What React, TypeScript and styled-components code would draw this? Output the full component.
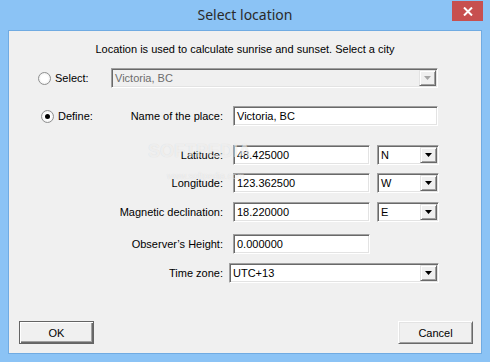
import {FC} from 'react';
import {createGlobalStyle, styled} from 'styled-components';

const GlobalStyle = createGlobalStyle`
  html, body {
    margin: 0;
    padding: 0;
  }
  body {
    width: 490px;
    height: 362px;
    overflow: hidden;
    font-family: "Liberation Sans", Arial, sans-serif;
    font-size: 11px;
    color: #000000;
  }
`;

const ArrowIcon: FC<{disabled?: boolean}> = ({disabled}) => (
  <svg width="7" height="4" viewBox="0 0 7 4">
    <path d="M0 0h7L3.5 4z" fill={disabled ? '#a6a6a6' : '#000000'} />
  </svg>
);

const Combo: FC<{value: string; width: number; disabled?: boolean}> = props => {
  const {value, width, disabled} = props;
  return (
    <Sunken $width={width} $disabled={disabled}>
      <Value $disabled={disabled}>{value}</Value>
      <DropButton>
        <ArrowIcon disabled={disabled} />
      </DropButton>
    </Sunken>
  );
};

const Field: FC<{value: string; width: number}> = ({value, width}) => (
  <Sunken $width={width}>
    <Value>{value}</Value>
  </Sunken>
);

const coords = [
  {label: 'Latitude:', value: '48.425000', dir: 'N', mt: 19},
  {label: 'Longitude:', value: '123.362500', dir: 'W', mt: 8},
  {label: 'Magnetic declination:', value: '18.220000', dir: 'E', mt: 9},
];

export default function App() {
  return (
    <>
      <GlobalStyle />
      <Window>
        <TitleBar>
          <Title>Select location</Title>
          <CloseButton>
            <svg width="10" height="9" viewBox="0 0 10 9">
              <path d="M1 0.5l8 8M9 0.5l-8 8" stroke="#ffffff" strokeWidth="2" />
            </svg>
          </CloseButton>
        </TitleBar>
        <Client>
          <Intro>Location is used to calculate sunrise and sunset. Select a city</Intro>

          <Row $mt={12}>
            <LeftCol $width={102}>
              <RadioOption $indent={29}>
                <Radio />
                Select:
              </RadioOption>
            </LeftCol>
            <Combo value="Victoria, BC" width={327} disabled />
          </Row>

          <Row $mt={18}>
            <LeftCol $width={214}>
              <RadioOption $indent={32}>
                <Radio $checked />
                Define:
              </RadioOption>
              <span>Name of the place:</span>
            </LeftCol>
            <Spacer $width={10} />
            <Field value="Victoria, BC" width={205} />
          </Row>

          {coords.map(c => (
            <Row key={c.label} $mt={c.mt}>
              <Label>{c.label}</Label>
              <Spacer $width={10} />
              <Field value={c.value} width={137} />
              <Spacer $width={7} />
              <Combo value={c.dir} width={62} />
            </Row>
          ))}

          <Row $mt={12}>
            <Label>Observer’s Height:</Label>
            <Spacer $width={10} />
            <Field value="0.000000" width={137} />
          </Row>

          <Row $mt={9}>
            <Label>Time zone:</Label>
            <Spacer $width={6} />
            <Combo value="UTC+13" width={210} />
          </Row>

          <Footer>
            <Button $default>OK</Button>
            <Button>Cancel</Button>
          </Footer>

          <Watermark>
            SOFTPEDIA
            <small>www.softpedia.com</small>
          </Watermark>
        </Client>
      </Window>
    </>
  );
}

const Window = styled.div`
  width: 490px;
  height: 362px;
  box-sizing: border-box;
  display: flex;
  flex-direction: column;
  background: #8bc3f5;
`;

const TitleBar = styled.div`
  height: 30px;
  flex-shrink: 0;
  display: grid;
  grid-template-columns: 1fr auto 1fr;
  align-items: start;
`;

const Title = styled.div`
  grid-column: 2;
  font-family: "Noto Sans", "Open Sans", sans-serif;
  font-size: 14px;
  line-height: 30px;
  color: #2a2a2a;
`;

const CloseButton = styled.div`
  grid-column: 3;
  justify-self: end;
  margin: 1px 7px 0 0;
  width: 31px;
  height: 20px;
  background: #c75050;
  display: flex;
  align-items: center;
  justify-content: center;
`;

const Client = styled.div`
  position: relative;
  flex: 1;
  margin: 0 8px 8px;
  background: #f0f0f0;
  border: 1px solid #70abe2;
  display: flex;
  flex-direction: column;
`;

const Intro = styled.div`
  margin-top: 11px;
  line-height: 14px;
  text-align: center;
`;

const Row = styled.div<{$mt: number}>`
  display: flex;
  align-items: center;
  height: 20px;
  margin-top: ${p => p.$mt}px;
`;

const LeftCol = styled.div<{$width: number}>`
  width: ${p => p.$width}px;
  flex-shrink: 0;
  display: flex;
  align-items: center;
  justify-content: space-between;
`;

const RadioOption = styled.label<{$indent: number}>`
  display: flex;
  align-items: center;
  gap: 4px;
  padding-left: ${p => p.$indent}px;
`;

const Radio = styled.span<{$checked?: boolean}>`
  position: relative;
  width: 13px;
  height: 13px;
  box-sizing: border-box;
  border-radius: 50%;
  border: 1px solid #8e8f8f;
  background: radial-gradient(circle at 50% 50%, #ffffff 40%, #e6e6e6 100%);
  &::after {
    content: '';
    display: ${p => (p.$checked ? 'block' : 'none')};
    position: absolute;
    left: 3px;
    top: 3px;
    width: 5px;
    height: 5px;
    border-radius: 50%;
    background: #000000;
  }
`;

const Label = styled.div`
  width: 214px;
  flex-shrink: 0;
  text-align: right;
`;

const Spacer = styled.div<{$width: number}>`
  width: ${p => p.$width}px;
  flex-shrink: 0;
`;

const Sunken = styled.div<{$width: number; $disabled?: boolean}>`
  width: ${p => p.$width}px;
  height: 20px;
  flex-shrink: 0;
  box-sizing: border-box;
  display: flex;
  align-items: stretch;
  padding: 1px;
  background: ${p => (p.$disabled ? '#f0f0f0' : '#ffffff')};
  border: 1px solid;
  border-color: #a0a0a0 #ffffff #ffffff #a0a0a0;
  box-shadow:
    inset 1px 1px #696969,
    inset -1px -1px #e3e3e3;
`;

const Value = styled.div<{$disabled?: boolean}>`
  flex: 1;
  display: flex;
  align-items: center;
  padding-left: 2px;
  color: ${p => (p.$disabled ? '#6d6d6d' : '#000000')};
  white-space: nowrap;
`;

const DropButton = styled.div`
  width: 17px;
  box-sizing: border-box;
  display: flex;
  align-items: center;
  justify-content: center;
  background: #f0f0f0;
  border: 1px solid;
  border-color: #e3e3e3 #696969 #696969 #e3e3e3;
  box-shadow:
    inset 1px 1px #ffffff,
    inset -1px -1px #a0a0a0;
`;

const Footer = styled.div`
  margin-top: auto;
  display: flex;
  justify-content: space-between;
  padding: 0 8px 9px 10px;
`;

const Button = styled.div<{$default?: boolean}>`
  width: 75px;
  height: 23px;
  box-sizing: border-box;
  display: flex;
  align-items: center;
  justify-content: center;
  background: #f0f0f0;
  border: 1px solid;
  border-color: ${p =>
    p.$default ? '#646464' : '#ffffff #696969 #696969 #ffffff'};
  box-shadow: ${p =>
    p.$default
      ? 'inset 1px 1px #ffffff, inset -1px -1px #696969, inset -2px -2px #a0a0a0'
      : 'inset 1px 1px #e3e3e3, inset -1px -1px #a0a0a0'};
`;

/* faint site watermark that lies over the form in the screenshot */
const Watermark = styled.div`
  position: absolute;
  left: 139px;
  top: 110px;
  display: flex;
  flex-direction: column;
  align-items: flex-start;
  font-family: "Liberation Sans", Arial, sans-serif;
  font-weight: bold;
  font-size: 18px;
  line-height: 20px;
  color: rgba(255, 255, 255, 0.6);
  text-shadow: 0 0 1px rgba(0, 0, 0, 0.12);
  pointer-events: none;
  & small {
    margin: 10px 0 0 19px;
    font-size: 9px;
    font-weight: normal;
    line-height: 11px;
  }
`;
